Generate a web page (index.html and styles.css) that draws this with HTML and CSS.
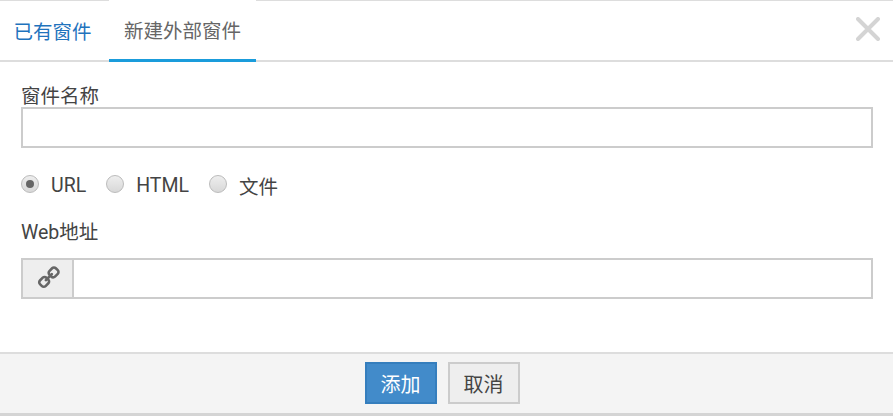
FILE: index.html
```html
<!DOCTYPE html>
<html lang="zh-CN">
<head>
    <meta charset="UTF-8">
    <title>新建外部窗件</title>
    <link rel="stylesheet" href="styles.css">
</head>
<body>
    <div class="dialog">
        <div class="tabs">
            <a class="tab">已有窗件</a>
            <a class="tab active">新建外部窗件</a>
            <svg class="close" width="24" height="24" viewBox="0 0 24 24">
                <path d="M2 2L22 22M22 2L2 22" stroke="#d4d4d4" stroke-width="4" stroke-linecap="round" fill="none"/>
            </svg>
        </div>
        <div class="body">
            <div class="form-group">
                <label class="name-label">窗件名称</label>
                <input type="text" class="text-input">
            </div>
            <div class="radio-row">
                <span class="radio checked"></span><span class="radio-label">URL</span>
                <span class="radio"></span><span class="radio-label">HTML</span>
                <span class="radio"></span><span class="radio-label">文件</span>
            </div>
            <label class="url-label">Web地址</label>
            <div class="input-group">
                <span class="addon">
                    <svg class="link-icon" width="24" height="24" viewBox="0 0 1792 1792">
                        <path transform="translate(1792 0) scale(-1 1)" fill="#666" d="M1456 1216q0-40-28-68l-208-208q-28-28-68-28-42 0-72 32 3 3 19 18.500t21.500 21.500 15 19 13 25.500 3.500 27.500q0 40-28 68t-68 28q-15 0-27.500-3.500t-25.500-13-19-15-21.500-21.500-18.500-19q-33 31-33 73 0 40 28 68l206 207q27 27 68 27 40 0 68-26l147-146q28-28 28-67zm-703-705q0-40-28-68l-206-207q-28-28-68-28-39 0-68 27l-147 146q-28 28-28 67 0 40 28 68l208 208q27 27 68 27 42 0 72-31-3-3-19-18.500t-21.500-21.500-15-19-13-25.500-3.500-27.500q0-40 28-68t68-28q15 0 27.500 3.500t25.500 13 19 15 21.500 21.500 18.500 19q33-31 33-73zm895 705q0 120-85 203l-147 146q-83 83-203 83-121 0-204-85l-206-207q-83-83-83-203 0-123 88-209l-88-88q-86 88-208 88-120 0-204-84l-208-208q-84-84-84-204t85-203l147-146q83-83 203-83 121 0 204 85l206 207q83 83 83 203 0 123-88 209l88 88q86-88 208-88 120 0 204 84l208 208q84 84 84 204z"/>
                    </svg>
                </span>
                <input type="text" class="group-input">
            </div>
        </div>
        <div class="footer">
            <button class="btn btn-primary">添加</button>
            <button class="btn btn-default">取消</button>
        </div>
    </div>
</body>
</html>
```

FILE: styles.css
```css
html, body {
    margin: 0;
    padding: 0;
    height: 416px;
    overflow: hidden;
}
body {
    font-family: Roboto, "Noto Sans CJK SC", sans-serif;
    font-size: 19.5px;
    color: #444;
    background: white;
}
.dialog {
    display: flex;
    flex-direction: column;
    height: 416px;
    box-sizing: border-box;
    border-bottom: 3px solid #d4d4d4;
}
.tabs {
    display: flex;
    align-items: stretch;
    height: 62px;
    flex: none;
    box-sizing: border-box;
    border-top: 1px solid #ddd;
    border-bottom: 2px solid #ddd;
    position: relative;
}
.tab {
    display: flex;
    align-items: center;
    justify-content: center;
    color: #1f73bd;
    width: 109px;
    height: 59px;
    padding-right: 4px;
    box-sizing: border-box;
}
.tab.active {
    width: 147px;
    height: 62px;
    margin-top: -1px;
    padding-right: 0;
    color: #666;
    background: white;
    border-bottom: 3px solid #1a9cdb;
}
.close {
    position: absolute;
    top: 16px;
    right: 13px;
}
.body {
    flex: 1;
    padding: 25px 20px 0 21px;
}
.form-group {
    display: flex;
    flex-direction: column;
}
.name-label {
    line-height: 20px;
}
.text-input, .group-input {
    display: block;
    box-sizing: border-box;
    height: 41px;
    width: 100%;
    border: 2px solid #ccc;
    background: white;
    outline: none;
    padding: 0 8px;
}
.radio-row {
    display: flex;
    align-items: center;
    margin-top: 25px;
    height: 24px;
}
.radio {
    box-sizing: border-box;
    width: 18px;
    height: 18px;
    border: 1px solid #bbb;
    border-radius: 50%;
    background: linear-gradient(#eee, #d8d8d8);
    position: relative;
    margin-bottom: 3px;
}
.radio.checked::after {
    content: "";
    position: absolute;
    top: 4px;
    left: 4px;
    width: 8px;
    height: 8px;
    border-radius: 50%;
    background: #666;
}
.radio-label {
    margin-left: 12px;
    margin-right: 20px;
}
.url-label {
    display: block;
    margin-top: 24px;
    line-height: 24px;
}
.input-group {
    display: flex;
    margin-top: 13px;
}
.addon {
    display: flex;
    align-items: center;
    justify-content: center;
    box-sizing: border-box;
    width: 51px;
    height: 41px;
    flex: none;
    background: #eee;
    border: 2px solid #ccc;
    border-right: 0;
}
.link-icon {
    margin-bottom: 2px;
}
.group-input {
    flex: 1;
}
.footer {
    display: flex;
    justify-content: center;
    gap: 11px;
    height: 61px;
    flex: none;
    box-sizing: border-box;
    padding-top: 8px;
    padding-right: 9px;
    background: #f4f4f4;
    border-top: 2px solid #ddd;
}
.btn {
    width: 72px;
    height: 42px;
    font-family: inherit;
    font-size: 20px;
    box-sizing: border-box;
    padding: 0;
}
.btn-primary {
    background: #428bca;
    border: 2px solid #357ebd;
    color: white;
}
.btn-default {
    background: #eee;
    border: 2px solid #ccc;
    color: #444;
}
```
